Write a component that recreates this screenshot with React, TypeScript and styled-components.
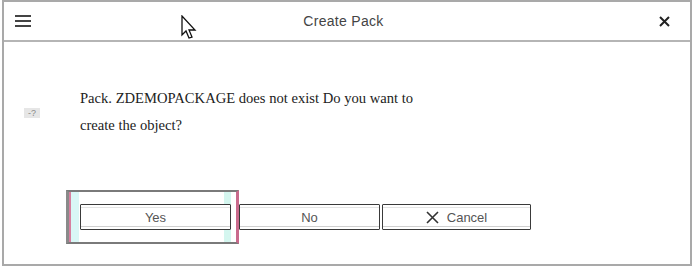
import React from "react";
import styled, { createGlobalStyle } from "styled-components";

const Global = createGlobalStyle`
  html, body { margin: 0; padding: 0; background: #fff; }
  body { width: 694px; height: 268px; overflow: hidden; }
  #root { width: 694px; height: 268px; }
`;

const Dialog = styled.div`
  position: relative;
  box-sizing: border-box;
  margin-left: 2px;
  width: 690px;
  height: 266px;
  border: 2px solid #a9a9a9;
  display: flex;
  flex-direction: column;
  background: #fff;
  font-family: "Liberation Sans", Arial, sans-serif;
`;

const Header = styled.div`
  box-sizing: border-box;
  height: 40px;
  border-bottom: 2px solid #b5b5b5;
  display: flex;
  align-items: center;
  padding: 0 18px 0 11px;
`;

const Title = styled.div`
  flex: 1;
  text-align: center;
  font-size: 14px;
  color: #444;
  letter-spacing: 0.3px;
`;

const IconBtn = styled.div`
  width: 16px;
  height: 16px;
  display: flex;
  align-items: center;
  justify-content: center;
`;

const Body = styled.div`
  flex: 1;
  display: flex;
  flex-direction: column;
`;

const MessageRow = styled.div`
  display: flex;
  padding-top: 43px;
`;

const IconCol = styled.div`
  width: 76px;
  display: flex;
  align-items: center;
  padding-left: 20px;
  padding-top: 2px;
  box-sizing: border-box;
`;

const QIcon = styled.div`
  width: 16px;
  height: 10px;
  background: #e6e6e6;
  color: #8a8a8a;
  font-size: 9px;
  line-height: 10px;
  text-align: center;
`;

const Message = styled.div`
  font-family: "Liberation Serif", "Times New Roman", serif;
  font-size: 14.6px;
  line-height: 27px;
  color: #222;
  white-space: nowrap;
`;

const ButtonRow = styled.div`
  display: flex;
  align-items: center;
  margin-top: 51px;
  padding-left: 62px;
`;

const FocusFrame = styled.div`
  box-sizing: border-box;
  width: 173px;
  height: 54px;
  border-top: 2px solid #7a7a7a;
  border-bottom: 2px solid #7a7a7a;
  border-left: 3px solid #8a8a8a;
  border-right: 3px solid #c96a8c;
  box-shadow: inset 2px 0 0 #d77f9f;
  display: flex;
  align-items: center;
  padding: 0 3px 0 11px;
  background: linear-gradient(to right, #d9f7f6 0, #d9f7f6 10px, #fff 10px, #fff calc(100% - 12px), #d4f6ef calc(100% - 12px), #d4f6ef calc(100% - 5px), #fff calc(100% - 5px));
`;

const Button = styled.button<{ $w: number }>`
  box-sizing: border-box;
  width: ${(p) => p.$w}px;
  height: 26px;
  background: #fff;
  border: 1px solid #3a3a3a;
  box-shadow: inset 0 -2px 0 #fff, inset 0 -3px 0 #d0d0d0, inset 0 2px 0 #fff, inset 0 3px 0 #e4e4e4;
  border-radius: 1px;
  font-family: "Liberation Sans", Arial, sans-serif;
  font-size: 13px;
  color: #555;
  display: flex;
  align-items: center;
  justify-content: center;
  gap: 8px;
  padding: 0;
  margin-right: 2px;
`;

const Cursor = styled.svg`
  position: absolute;
  left: 176px;
  top: 13px;
`;

export default function App() {
  return (
    <>
      <Global />
      <Dialog>
        <Header>
          <IconBtn>
            <svg width="16" height="12" viewBox="0 0 16 12">
              <rect x="0" y="0" width="16" height="2" fill="#444" />
              <rect x="0" y="5" width="16" height="2" fill="#444" />
              <rect x="0" y="10" width="16" height="2" fill="#444" />
            </svg>
          </IconBtn>
          <Title>Create Pack</Title>
          <IconBtn>
            <svg width="11" height="11" viewBox="0 0 11 11">
              <path d="M1 1 L10 10 M10 1 L1 10" stroke="#222" strokeWidth="2" />
            </svg>
          </IconBtn>
        </Header>
        <Body>
          <MessageRow>
            <IconCol>
              <QIcon>-?</QIcon>
            </IconCol>
            <Message>
              Pack. ZDEMOPACKAGE does not exist Do you want to
              <br />
              create the object?
            </Message>
          </MessageRow>
          <ButtonRow>
            <FocusFrame>
              <Button $w={153}>Yes</Button>
            </FocusFrame>
            <Button $w={141}>No</Button>
            <Button $w={149}>
              <svg width="13" height="13" viewBox="0 0 13 13">
                <path d="M1 1 L12 12 M12 1 L1 12" stroke="#333" strokeWidth="1.6" />
              </svg>
              Cancel
            </Button>
          </ButtonRow>
        </Body>
        <Cursor width="18" height="26" viewBox="0 0 18 26">
          <path d="M2 1 L2 20 L6 16 L9 23 L12 22 L9 15 L15 15 Z" fill="#fff" stroke="#111" strokeWidth="1.3" />
        </Cursor>
      </Dialog>
    </>
  );
}
